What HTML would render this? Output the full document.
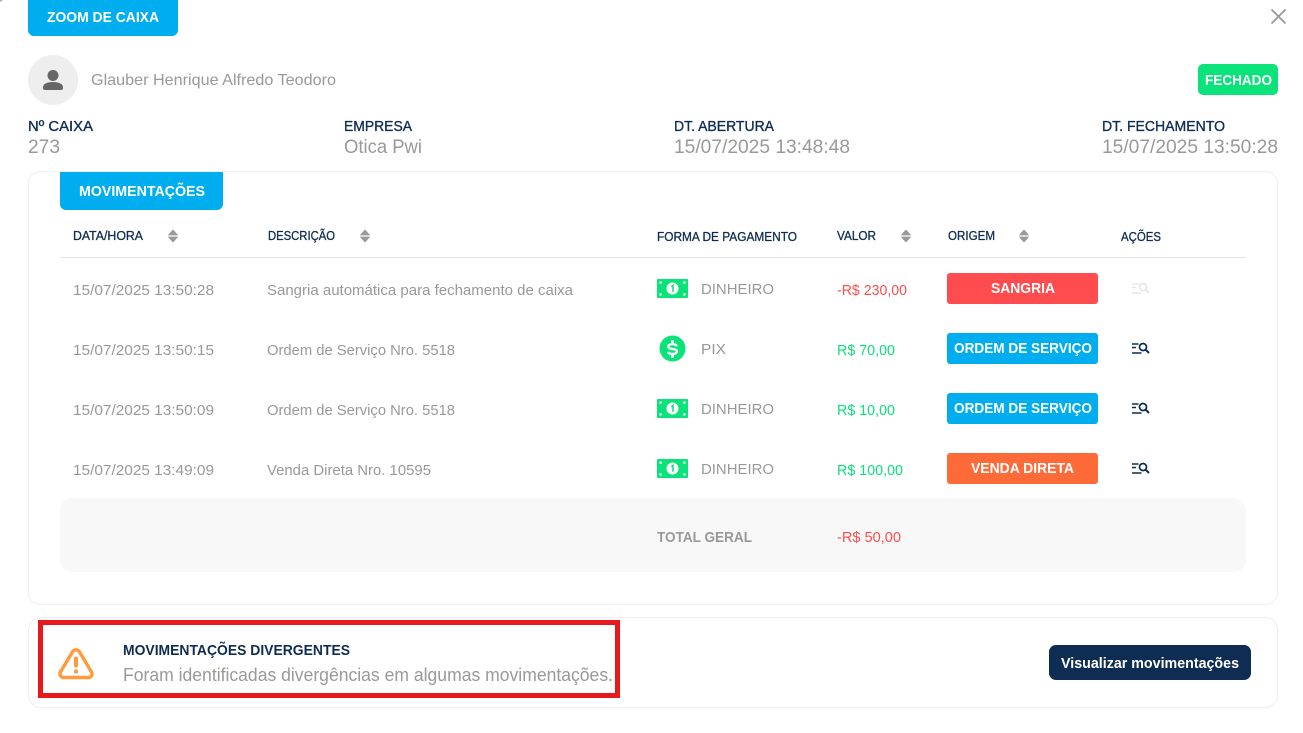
<!DOCTYPE html>
<html lang="pt-BR">
<head>
<meta charset="utf-8">
<title>Zoom de Caixa</title>
<style>
html,body{margin:0;padding:0;background:#fff;width:1303px;height:733px;overflow:hidden}
svg{display:block}
text{font-family:"Liberation Sans",sans-serif;white-space:pre}
.w{fill:#fff;font-weight:700;font-size:15px}
.l{fill:#0f2d52;font-size:15px;stroke:#0f2d52;stroke-width:.35px}
.h{fill:#0f2d52;font-size:12.500px;stroke:#0f2d52;stroke-width:.3px}
.v{fill:#999;font-size:19.500px}
.c{fill:#999;font-size:15px}
.r{fill:#ff4d4f;font-size:15px}
.g{fill:#0ae27a;font-size:15px}
</style>
</head>
<body>
<svg width="1303" height="733" viewBox="0 0 1303 733" xmlns="http://www.w3.org/2000/svg">
<defs>
  <g id="sort"><path d="M0 5 4.500 0 9 5z" fill="#999" stroke="#999" stroke-width=".8" stroke-linejoin="round"/><path d="M0 7h9l-4.500 5z" fill="#999" stroke="#999" stroke-width=".8" stroke-linejoin="round"/></g>
  <g id="money">
    <rect width="31" height="19" rx="1" fill="#0ae27a"/>
    <circle cx="15.500" cy="9.500" r="6" fill="#fff"/>
    <path d="M14.300 7.700l1.700-1.100v6.200" fill="none" stroke="#0ae27a" stroke-width="1.600"/>
    <g fill="#fff"><rect x="2.500" y="2.500" width="2.200" height="2.200"/><rect x="26.300" y="2.500" width="2.200" height="2.200"/><rect x="2.500" y="14.300" width="2.200" height="2.200"/><rect x="26.300" y="14.300" width="2.200" height="2.200"/></g>
  </g>
  <g id="act" fill="none" stroke-linecap="butt">
    <path d="M0 1h6.500M0 4.500h4M0 10h9.500" stroke-width="1.600"/>
    <circle cx="11" cy="4" r="3.500" stroke-width="1.700"/>
    <path d="M13.500 6.500 17 10" stroke-width="2"/>
  </g>
</defs>

<rect width="1303" height="733" fill="#fff"/>
<path d="M0 0h3L0 2z" fill="#aaa"/>

<!-- top tab -->
<path d="M28 0h150v30a6 6 0 0 1-6 6H34a6 6 0 0 1-6-6z" fill="#00aeef"/>
<text class="w" x="47" y="22" textLength="112" lengthAdjust="spacingAndGlyphs">ZOOM DE CAIXA</text>

<!-- close -->
<path d="M1271.500 9.500l14 14M1285.500 9.500l-14 14" stroke="#999" stroke-width="1.800" fill="none"/>

<!-- avatar -->
<circle cx="53" cy="80" r="25" fill="#eee"/>
<circle cx="53" cy="75.500" r="5.500" fill="#666"/>
<path d="M43 87.500c0-3.500 3.500-5.500 10-5.500s10 2 10 5.500v.5a2 2 0 0 1-2 2H45a2 2 0 0 1-2-2z" fill="#666"/>
<text x="91" y="85" font-size="16" fill="#999" textLength="245" lengthAdjust="spacingAndGlyphs">Glauber Henrique Alfredo Teodoro</text>

<!-- status -->
<rect x="1198" y="64" width="80" height="31" rx="5" fill="#0ae27a"/>
<text class="w" x="1205" y="85" textLength="67" lengthAdjust="spacingAndGlyphs">FECHADO</text>

<!-- info -->
<text class="l" x="28" y="131" textLength="65" lengthAdjust="spacingAndGlyphs">Nº CAIXA</text>
<text class="v" x="28" y="153" textLength="32" lengthAdjust="spacingAndGlyphs">273</text>
<text class="l" x="344" y="131" textLength="68" lengthAdjust="spacingAndGlyphs">EMPRESA</text>
<text class="v" x="344" y="153" textLength="78" lengthAdjust="spacingAndGlyphs">Otica Pwi</text>
<text class="l" x="674" y="131" textLength="100" lengthAdjust="spacingAndGlyphs">DT. ABERTURA</text>
<text class="v" x="674" y="153" textLength="176" lengthAdjust="spacingAndGlyphs">15/07/2025 13:48:48</text>
<text class="l" x="1102" y="131" textLength="123" lengthAdjust="spacingAndGlyphs">DT. FECHAMENTO</text>
<text class="v" x="1102" y="153" textLength="176" lengthAdjust="spacingAndGlyphs">15/07/2025 13:50:28</text>

<!-- main card -->
<rect x="28.500" y="171.500" width="1249" height="433" rx="12" fill="#fff" stroke="#eee"/>
<path d="M60 172h163v32a6 6 0 0 1-6 6H66a6 6 0 0 1-6-6z" fill="#00aeef"/>
<text class="w" x="79" y="196" textLength="126" lengthAdjust="spacingAndGlyphs">MOVIMENTAÇÕES</text>

<!-- table header -->
<text class="h" x="73" y="240" textLength="70" lengthAdjust="spacingAndGlyphs">DATA/HORA</text>
<use href="#sort" x="168.500" y="230"/>
<text class="h" x="268" y="240" textLength="67" lengthAdjust="spacingAndGlyphs">DESCRIÇÃO</text>
<use href="#sort" x="360.500" y="230"/>
<text class="h" x="657" y="241" textLength="140" lengthAdjust="spacingAndGlyphs">FORMA DE PAGAMENTO</text>
<text class="h" x="837" y="240" textLength="39" lengthAdjust="spacingAndGlyphs">VALOR</text>
<use href="#sort" x="901.500" y="230"/>
<text class="h" x="948" y="240" textLength="47" lengthAdjust="spacingAndGlyphs">ORIGEM</text>
<use href="#sort" x="1019.500" y="230"/>
<text class="h" x="1121" y="241" textLength="40" lengthAdjust="spacingAndGlyphs">AÇÕES</text>
<path d="M60 257.500h1186" stroke="#e3e3e3" fill="none"/>

<!-- row 1 -->
<text class="c" x="73" y="295" textLength="141" lengthAdjust="spacingAndGlyphs">15/07/2025 13:50:28</text>
<text class="c" x="267" y="295" textLength="306" lengthAdjust="spacingAndGlyphs">Sangria automática para fechamento de caixa</text>
<use href="#money" x="657" y="279"/>
<text class="c" x="701" y="294" textLength="73" lengthAdjust="spacingAndGlyphs">DINHEIRO</text>
<text class="r" x="837" y="295" textLength="70" lengthAdjust="spacingAndGlyphs">-R$ 230,00</text>
<rect x="947" y="273" width="151" height="31" rx="3" fill="#ff4d4f"/>
<text class="w" x="991" y="293" textLength="64" lengthAdjust="spacingAndGlyphs">SANGRIA</text>
<use href="#act" x="1132" y="283" stroke="#e6e6e6"/>

<!-- row 2 -->
<text class="c" x="73" y="355" textLength="141" lengthAdjust="spacingAndGlyphs">15/07/2025 13:50:15</text>
<text class="c" x="267" y="355" textLength="188" lengthAdjust="spacingAndGlyphs">Ordem de Serviço Nro. 5518</text>
<circle cx="672.500" cy="348.500" r="13" fill="#0ae27a"/>
<path d="M676.800 346.300c-.3-1.300-2-2.200-4.300-2.200-2.500 0-4.200 1-4.200 2.400 0 3.700 8.600 1.400 8.600 5 0 1.500-1.900 2.500-4.400 2.500-2.400 0-4.100-.9-4.400-2.300" fill="none" stroke="#fff" stroke-width="2.300"/>
<path d="M672.500 340v4.500M672.500 354v4" fill="none" stroke="#fff" stroke-width="2.600"/>
<text class="c" x="701" y="354" textLength="25" lengthAdjust="spacingAndGlyphs">PIX</text>
<text class="g" x="837" y="355" textLength="58" lengthAdjust="spacingAndGlyphs">R$ 70,00</text>
<rect x="947" y="333" width="151" height="31" rx="3" fill="#00aeef"/>
<text class="w" x="954" y="353" textLength="138" lengthAdjust="spacingAndGlyphs">ORDEM DE SERVIÇO</text>
<use href="#act" x="1132" y="343" stroke="#0f2d52"/>

<!-- row 3 -->
<text class="c" x="73" y="415" textLength="141" lengthAdjust="spacingAndGlyphs">15/07/2025 13:50:09</text>
<text class="c" x="267" y="415" textLength="188" lengthAdjust="spacingAndGlyphs">Ordem de Serviço Nro. 5518</text>
<use href="#money" x="657" y="399"/>
<text class="c" x="701" y="414" textLength="73" lengthAdjust="spacingAndGlyphs">DINHEIRO</text>
<text class="g" x="837" y="415" textLength="58" lengthAdjust="spacingAndGlyphs">R$ 10,00</text>
<rect x="947" y="393" width="151" height="31" rx="3" fill="#00aeef"/>
<text class="w" x="954" y="413" textLength="138" lengthAdjust="spacingAndGlyphs">ORDEM DE SERVIÇO</text>
<use href="#act" x="1132" y="403" stroke="#0f2d52"/>

<!-- row 4 -->
<text class="c" x="73" y="475" textLength="141" lengthAdjust="spacingAndGlyphs">15/07/2025 13:49:09</text>
<text class="c" x="267" y="475" textLength="164" lengthAdjust="spacingAndGlyphs">Venda Direta Nro. 10595</text>
<use href="#money" x="657" y="459"/>
<text class="c" x="701" y="474" textLength="73" lengthAdjust="spacingAndGlyphs">DINHEIRO</text>
<text class="g" x="837" y="475" textLength="66" lengthAdjust="spacingAndGlyphs">R$ 100,00</text>
<rect x="947" y="453" width="151" height="31" rx="3" fill="#ff6a39"/>
<text class="w" x="971" y="473" textLength="103" lengthAdjust="spacingAndGlyphs">VENDA DIRETA</text>
<use href="#act" x="1132" y="463" stroke="#0f2d52"/>

<!-- total -->
<rect x="60" y="498" width="1186" height="74" rx="12" fill="#f8f8f8"/>
<text x="657" y="542" font-size="15" font-weight="700" fill="#999" textLength="95" lengthAdjust="spacingAndGlyphs">TOTAL GERAL</text>
<text class="r" x="837" y="542" textLength="64" lengthAdjust="spacingAndGlyphs">-R$ 50,00</text>

<!-- bottom card -->
<rect x="28.500" y="617.500" width="1249" height="90" rx="12" fill="#fff" stroke="#eee"/>
<path d="M76 649.800c-1.600 0-2.900.9-3.700 2.300L60.600 671.800c-1.700 3 .3 5.700 3.400 5.700h24c3.100 0 5.100-2.700 3.400-5.700l-11.700-19.700c-.8-1.400-2.100-2.300-3.700-2.300z" fill="none" stroke="#ff9a3d" stroke-width="3.400" stroke-linejoin="round"/>
<path d="M76 658.500v7" stroke="#ff9a3d" stroke-width="4" stroke-linecap="round" fill="none"/>
<circle cx="76" cy="671.500" r="2.200" fill="#ff9a3d"/>
<text x="123" y="655" font-size="15" font-weight="700" fill="#0f2d52" textLength="227" lengthAdjust="spacingAndGlyphs">MOVIMENTAÇÕES DIVERGENTES</text>
<text x="123" y="681" font-size="18.500" fill="#999" textLength="490" lengthAdjust="spacingAndGlyphs">Foram identificadas divergências em algumas movimentações.</text>
<rect x="1049" y="645" width="202" height="35" rx="7" fill="#0f2d52"/>
<text class="w" x="1061" y="668" textLength="178" lengthAdjust="spacingAndGlyphs">Visualizar movimentações</text>

<!-- highlight annotation -->
<rect x="40.500" y="622.500" width="577" height="73" fill="none" stroke="#e8191c" stroke-width="5"/>
</svg>
</body>
</html>
